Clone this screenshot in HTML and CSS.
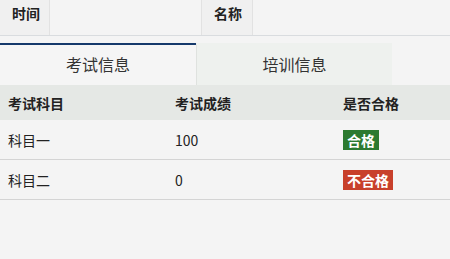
FILE: index.html
```
<!DOCTYPE html>
<html lang="zh">
<head>
<meta charset="utf-8">
<link rel="stylesheet" href="styles.css">
</head>
<body>
<div class="info">
  <div class="label">时间</div>
  <div class="value"></div>
  <div class="label">名称</div>
  <div class="value last"></div>
</div>
<div class="tabs">
  <div class="tab active">考试信息</div>
  <div class="tab">培训信息</div>
</div>
<div class="table">
  <div class="row head">
    <div class="cell">考试科目</div>
    <div class="cell">考试成绩</div>
    <div class="cell">是否合格</div>
  </div>
  <div class="row">
    <div class="cell">科目一</div>
    <div class="cell">100</div>
    <div class="cell"><span class="badge pass">合格</span></div>
  </div>
  <div class="row">
    <div class="cell">科目二</div>
    <div class="cell">0</div>
    <div class="cell"><span class="badge fail">不合格</span></div>
  </div>
</div>
</body>
</html>
```
FILE: styles.css
```
html, body {
  margin: 0;
  padding: 0;
  background: #f4f4f4;
  font-family: "Noto Sans CJK SC", "Noto Sans", sans-serif;
  color: #222;
}
.info {
  display: grid;
  grid-template-columns: 50px 152px 51px 1fr;
  height: 35px;
  border-bottom: 1px solid #d9dcdf;
}
.info .label {
  background: #f0f0f0;
  border-right: 1px solid #e2e2e2;
  font-weight: bold;
  font-size: 14px;
  padding: 3px 0 0 12px;
}
.info .value {
  border-right: 1px solid #e2e2e2;
}
.info .value.last {
  border-right: none;
}
.tabs {
  display: flex;
  margin-top: 7px;
  height: 42px;
}
.tab {
  width: 196px;
  box-sizing: border-box;
  display: flex;
  align-items: center;
  justify-content: center;
  padding-bottom: 3px;
  font-size: 16px;
  color: #333;
  border-top: 2px solid transparent;
  background: #eef1ee;
  border-left: 1px solid #dfe2df;
}
.tab.active {
  background: #f5f5f5;
  border-top-color: #15396b;
  border-left: none;
}
.table {
  display: flex;
  flex-direction: column;
}
.row {
  display: grid;
  grid-template-columns: 167px 168px 1fr;
  height: 40px;
  align-items: center;
  border-bottom: 1px solid #d4d4d4;
  box-sizing: border-box;
  font-size: 14px;
}
.row.head {
  height: 35px;
  background: #e5e8e5;
  font-weight: bold;
  border-bottom: none;
}
.cell {
  padding-left: 8px;
}
.badge {
  display: inline-block;
  color: #fff;
  font-weight: bold;
  font-size: 14px;
  line-height: 20px;
  padding: 0 4px;
}
.badge.pass {
  background: #2c7a30;
}
.badge.fail {
  background: #c8402b;
}
```
